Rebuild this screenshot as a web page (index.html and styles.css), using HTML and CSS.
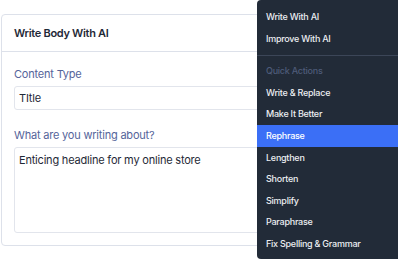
FILE: index.html
```html
<!DOCTYPE html>
<html lang="en">
<head>
    <meta charset="UTF-8">
    <meta name="viewport" content="width=device-width, initial-scale=1.0">
    <title>Write Body With AI</title>
    <link rel="stylesheet" href="styles.css">
</head>
<body>
    <div class="card">
        <div class="card-header">Write Body With AI</div>
        <div class="card-body">
            <label class="field-label">Content Type</label>
            <div class="input">TItle</div>

            <label class="field-label second">What are you writing about?</label>
            <div class="textarea">Enticing headline for my online store</div>
        </div>
    </div>

    <div class="menu">
        <div class="menu-item">Write With AI</div>
        <div class="menu-item">Improve With AI</div>
        <div class="menu-sep"></div>
        <div class="menu-item heading">Quick Actions</div>
        <div class="menu-item">Write &amp; Replace</div>
        <div class="menu-item">Make It Better</div>
        <div class="menu-item active">Rephrase</div>
        <div class="menu-item">Lengthen</div>
        <div class="menu-item">Shorten</div>
        <div class="menu-item">Simplify</div>
        <div class="menu-item">Paraphrase</div>
        <div class="menu-item">Fix Spelling &amp; Grammar</div>
    </div>
</body>
</html>
```

FILE: styles.css
```css
body {
    font-family: Inter, "Noto Sans", sans-serif;
    background: #fff;
    margin: 0;
    padding: 14px 0 0 1px;
    width: 398px;
    height: 260px;
    overflow: hidden;
    position: relative;
    box-sizing: border-box;
}
.card {
    width: 300px;
    border: 1px solid #dde1ea;
    border-radius: 4px;
    box-sizing: border-box;
}
.card-header {
    height: 36px;
    display: flex;
    align-items: center;
    padding-left: 12px;
    font-size: 11px;
    letter-spacing: -0.3px;
    font-weight: 600;
    color: #1f2937;
    border-bottom: 1px solid #dde1ea;
}
.card-body {
    padding: 15px 12px 12px;
}
.field-label {
    display: block;
    font-size: 11px;
    letter-spacing: -0.2px;
    line-height: 15px;
    color: #55649a;
    margin-bottom: 4px;
}
.field-label.second {
    margin-top: 18px;
}
.input, .textarea {
    border: 1px solid #e2e5ec;
    border-radius: 3px;
    font-size: 11px;
    letter-spacing: -0.2px;
    color: #1f2937;
    padding: 0 4px;
    box-sizing: border-box;
}
.input {
    height: 24px;
    line-height: 22px;
}
.textarea {
    height: 86px;
    padding-top: 5px;
    line-height: 15px;
}
.menu {
    position: absolute;
    left: 257px;
    top: 0;
    width: 150px;
    height: 259px;
    background: #222b38;
    border-radius: 4px;
    padding: 6px 0 4px;
    box-sizing: border-box;
}
.menu-item {
    height: 21.6px;
    line-height: 21.6px;
    padding-left: 9px;
    font-size: 9px;
    letter-spacing: -0.25px;
    font-weight: 500;
    color: #eceef2;
}
.menu-item.heading {
    color: #4e5b78;
}
.menu-item.active {
    background: #3b6ff6;
    color: #fff;
}
.menu-sep {
    height: 1px;
    background: #3c4658;
    margin: 5.5px 0 4.6px;
}
```
